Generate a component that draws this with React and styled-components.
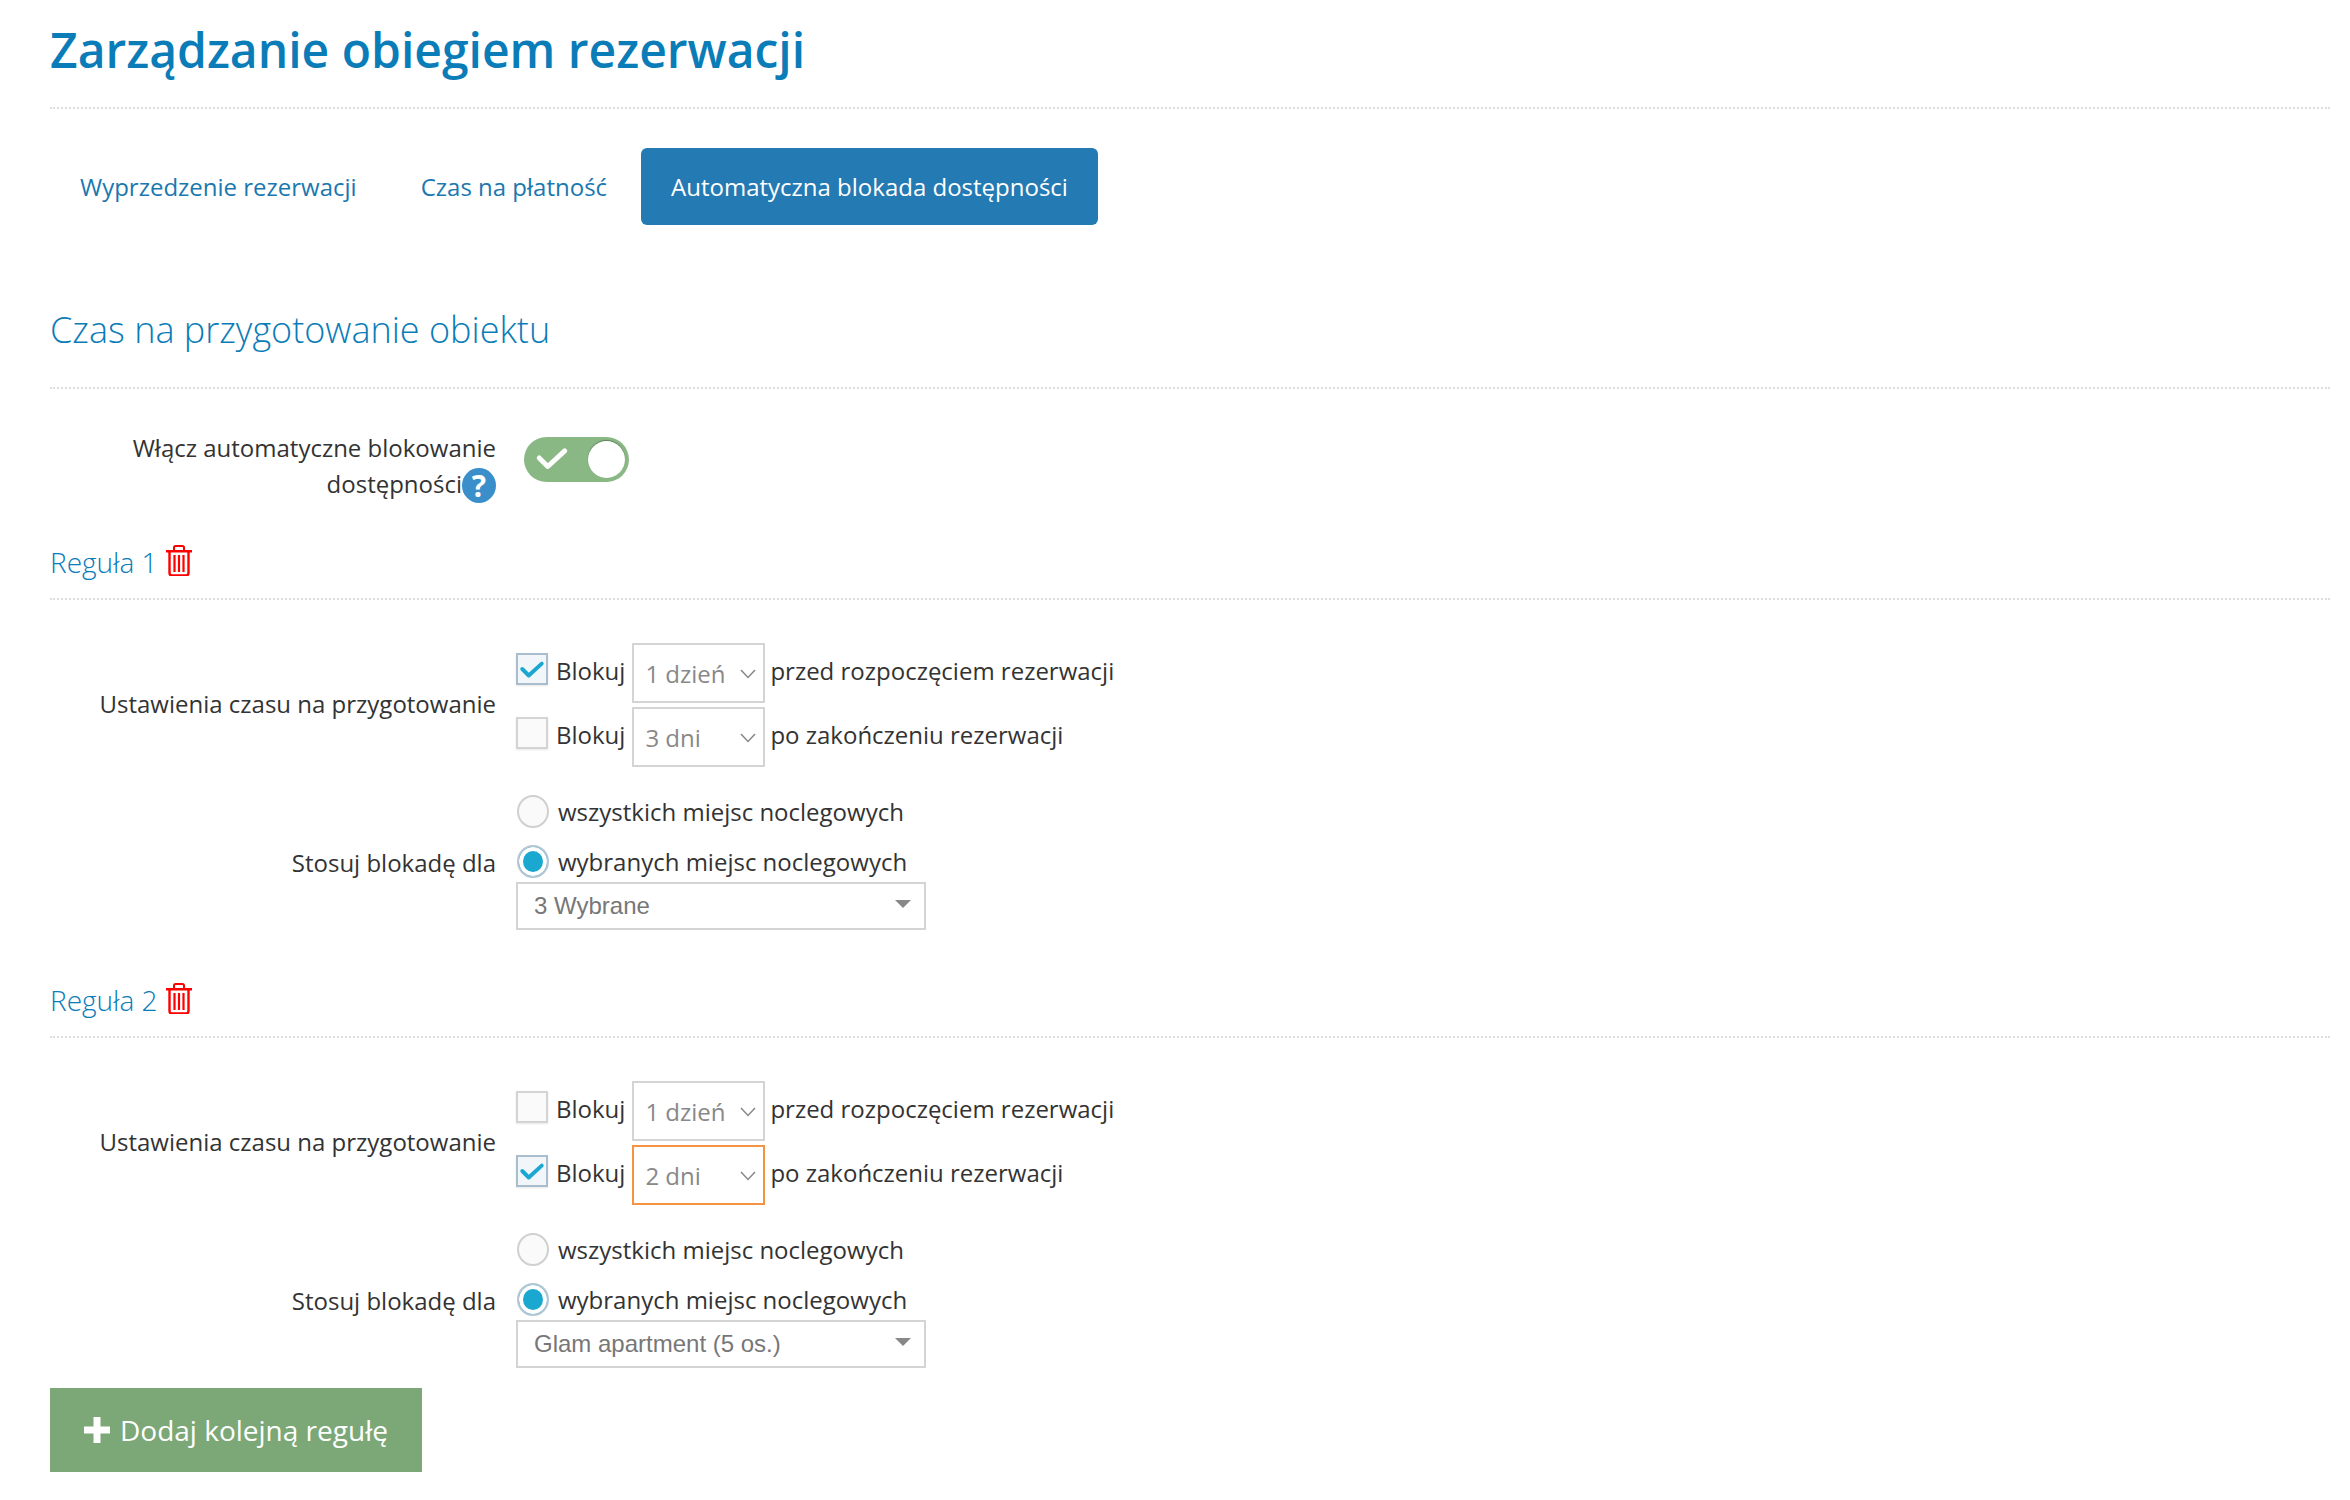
import React from 'react'
import styled, { createGlobalStyle } from 'styled-components'

const GlobalStyle = createGlobalStyle`
    html, body {
        margin: 0;
        padding: 0;
        background: #fff;
        font-family: "Open Sans", "Noto Sans", sans-serif;
        color: #333;
    }
`

const rules = [
    {
        name: 'Reguła 1',
        before: { checked: true, value: '1 dzień' },
        after: { checked: false, value: '3 dni' },
        units: '3 Wybrane',
    },
    {
        name: 'Reguła 2',
        before: { checked: false, value: '1 dzień' },
        after: { checked: true, value: '2 dni', focused: true },
        units: 'Glam apartment (5 os.)',
    },
]

const TrashIcon = () => (
    <TrashSvg viewBox="0 0 26 31">
        <path d="M8 5V2.600C8 1.700 8.700 1 9.600 1h6.800c.9 0 1.600.7 1.600 1.600V5" fill="none" stroke="#f00" strokeWidth="2" />
        <path d="M0 5h26v2.500H0z" fill="#f00" />
        <path d="M3.500 7v21c0 1.400 1.100 2.500 2.500 2.500h14c1.400 0 2.500-1.100 2.500-2.500V7" fill="none" stroke="#f00" strokeWidth="2.400" />
        <path d="M8.500 10v17M13 10v17M17.500 10v17" fill="none" stroke="#f00" strokeWidth="2.200" />
    </TrashSvg>
)

const Check = ({ size, color, width }) => (
    <svg width={size} height={size} viewBox="0 0 24 24">
        <path d="M3 12l6 6L21 7" fill="none" stroke={color} strokeWidth={width} strokeLinecap="round" strokeLinejoin="round" />
    </svg>
)

const Chevron = () => (
    <ChevronSvg viewBox="0 0 16 10">
        <path d="M1 1l7 7.500L15 1" fill="none" stroke="#888" strokeWidth="1.500" />
    </ChevronSvg>
)

const BlockRow = ({ checked, value, focused, suffix }) => (
    <Row>
        <CheckBox $checked={checked}>
            {checked && <Check size={26} color="#1ba8d0" width={3.6} />}
        </CheckBox>
        <InlineText $raised>Blokuj</InlineText>
        <DaySelect $focused={focused}>
            {value}
            <Chevron />
        </DaySelect>
        <InlineText $raised>{suffix}</InlineText>
    </Row>
)

const Rule = ({ rule }) => (
    <>
        <RuleHeading>
            {rule.name}
            <TrashIcon />
        </RuleHeading>

        <FormRow $gap={26}>
            <Label $raised>Ustawienia czasu na przygotowanie</Label>
            <Stack>
                <BlockRow {...rule.before} suffix="przed rozpoczęciem rezerwacji" />
                <BlockRow {...rule.after} suffix="po zakończeniu rezerwacji" />
            </Stack>
        </FormRow>

        <FormRow $gap={31}>
            <Label>Stosuj blokadę dla</Label>
            <Stack>
                <RadioRow>
                    <Radio />
                    <InlineText>wszystkich miejsc noclegowych</InlineText>
                </RadioRow>
                <RadioRow $spaced>
                    <Radio $checked />
                    <InlineText>wybranych miejsc noclegowych</InlineText>
                </RadioRow>
                <UnitSelect>
                    {rule.units}
                    <Caret />
                </UnitSelect>
            </Stack>
        </FormRow>
    </>
)

const App = () => {
    return (
        <>
            <GlobalStyle />
            <Page>
                <Title>Zarządzanie obiegiem rezerwacji</Title>

                <Tabs>
                    <Tab>Wyprzedzenie rezerwacji</Tab>
                    <Tab>Czas na płatność</Tab>
                    <Tab $active>Automatyczna blokada dostępności</Tab>
                </Tabs>

                <SectionTitle>Czas na przygotowanie obiektu</SectionTitle>

                <ToggleRow>
                    <Label>
                        Włącz automatyczne blokowanie dostępności
                        <Help>?</Help>
                    </Label>
                    <Toggle>
                        <Check size={34} color="#fff" width={3.5} />
                        <Knob />
                    </Toggle>
                </ToggleRow>

                {rules.map(rule => <Rule key={rule.name} rule={rule} />)}

                <AddButton>
                    <PlusIcon viewBox="0 0 26 26">
                        <path d="M9.500 0h7v9.500H26v7h-9.500V26h-7v-9.500H0v-7h9.500z" fill="#fff" />
                    </PlusIcon>
                    Dodaj kolejną regułę
                </AddButton>
            </Page>
        </>
    )
}

const Page = styled.div`
    width: 2280px;
    height: 1500px;
    margin-left: 50px;
    overflow: hidden;
    font-size: 24px;
    line-height: 36px;
`

const Title = styled.h1`
    height: 107px;
    margin: 0;
    border-bottom: 2px dotted #ddd;
    color: #0a7cb8;
    font-size: 48px;
    font-weight: 600;
    line-height: 100px;
`

const Tabs = styled.div`
    display: flex;
    gap: 4px;
    margin-top: 39px;
`

const Tab = styled.div`
    height: 77px;
    padding: 0 30px;
    border-radius: 6px;
    background: ${props => props.$active ? '#247ab3' : 'transparent'};
    color: ${props => props.$active ? '#fff' : '#1a78b0'};
    font-size: 24px;
    line-height: 77px;
`

const SectionTitle = styled.h2`
    height: 92px;
    margin: 70px 0 0;
    border-bottom: 2px dotted #ddd;
    color: #0a7cb8;
    font-size: 36px;
    font-weight: 300;
    line-height: 70px;
`

const FormRow = styled.div`
    display: grid;
    grid-template-columns: 446px 1fr;
    column-gap: 20px;
    align-items: center;
    margin-bottom: ${props => props.$gap}px;
`

const ToggleRow = styled(FormRow)`
    align-items: start;
    margin-top: 41px;
    margin-bottom: 0;
`

const Label = styled.div`
    margin-top: ${props => props.$raised ? '-3px' : '0'};
    text-align: right;
    color: #333;
`

const Help = styled.span`
    display: inline-block;
    width: 34px;
    height: 35px;
    margin-bottom: 2px;
    border-radius: 50%;
    background: #3a8fca;
    color: #fff;
    font-size: 30px;
    font-weight: 700;
    line-height: 35px;
    text-align: center;
    vertical-align: middle;
`

const Toggle = styled.div`
    display: flex;
    align-items: center;
    justify-content: space-between;
    box-sizing: border-box;
    width: 105px;
    height: 45px;
    margin: 7px 0 0 8px;
    padding: 0 4px 0 11px;
    border-radius: 23px;
    background: #8ab885;

    svg {
        margin-top: -4px;
    }
`

const Knob = styled.div`
    width: 37px;
    height: 37px;
    border-radius: 50%;
    background: #fff;
    box-shadow: 0 -1px 1px rgba(0, 0, 0, 0.3);
`

const RuleHeading = styled.h3`
    display: flex;
    align-items: center;
    gap: 8px;
    height: 72px;
    margin: 18px 0 41px;
    padding-top: 3px;
    border-bottom: 2px dotted #ddd;
    color: #0a7cb8;
    font-size: 28px;
    font-weight: 300;
`

const TrashSvg = styled.svg`
    width: 26px;
    height: 31px;
    margin-top: -4px;
`

const Stack = styled.div`
    display: flex;
    flex-direction: column;
`

const Row = styled.div`
    display: flex;
    align-items: center;
    gap: 8px;
    height: 64px;
`

const RadioRow = styled.div`
    display: flex;
    align-items: center;
    gap: 9px;
    height: 33px;
    margin-top: ${props => props.$spaced ? '17px' : '0'};
`

const InlineText = styled.span`
    margin-top: ${props => props.$raised ? '-5px' : '0'};
    color: #333;
    line-height: 36px;
`

const CheckBox = styled.div`
    display: flex;
    align-items: center;
    justify-content: center;
    box-sizing: border-box;
    width: 32px;
    height: 32px;
    margin-top: -9px;
    border: 2px solid ${props => props.$checked ? '#a9bdcc' : '#d4d4d4'};
    background: ${props => props.$checked ? '#f1f6fb' : '#fafafa'};
    box-shadow: 0 1px 2px rgba(0, 0, 0, 0.1);
`

const Radio = styled.div`
    flex: none;
    box-sizing: border-box;
    width: 32px;
    height: 33px;
    margin-left: 1px;
    border-radius: 50%;
    border: 2px solid ${props => props.$checked ? '#b5c6d3' : '#d0d0d0'};
    background: ${props => props.$checked ? '#1ba8d0' : '#fafafa'};
    box-shadow: ${props => props.$checked ? 'inset 0 0 0 4px #fff' : 'none'};
`

const DaySelect = styled.div`
    display: flex;
    align-items: center;
    justify-content: space-between;
    box-sizing: border-box;
    width: 133px;
    height: 60px;
    margin: 0 -3px 0 -1px;
    padding: 2px 7px 0 11px;
    border: 2px solid ${props => props.$focused ? '#f59342' : '#d4d4d4'};
    color: #888;
`

const ChevronSvg = styled.svg`
    width: 16px;
    height: 10px;
`

const UnitSelect = styled.div`
    display: flex;
    align-items: center;
    justify-content: space-between;
    box-sizing: border-box;
    width: 410px;
    height: 48px;
    margin-top: 4px;
    padding: 0 13px 0 16px;
    border: 2px solid #d4d4d4;
    color: #777;
    font-family: "Liberation Sans", Arial, sans-serif;
    font-size: 24px;
`

const Caret = styled.div`
    width: 0;
    height: 0;
    border-left: 8px solid transparent;
    border-right: 8px solid transparent;
    border-top: 8px solid #888;
    margin-top: -4px;
`

const AddButton = styled.div`
    display: flex;
    align-items: center;
    gap: 10px;
    box-sizing: border-box;
    width: 372px;
    height: 84px;
    margin-top: -11px;
    padding-left: 34px;
    background: #7ba876;
    color: #fff;
    font-size: 28px;
`

const PlusIcon = styled.svg`
    width: 26px;
    height: 26px;
`

export default App
